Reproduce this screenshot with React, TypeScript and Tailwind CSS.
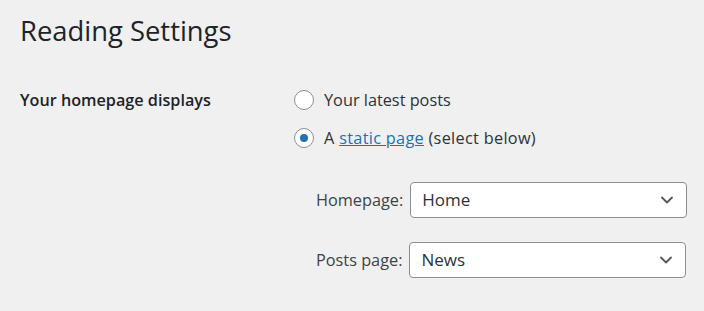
import { ChevronDown } from "lucide-react";

function Radio({ checked }: { checked?: boolean }) {
  return (
    <span className="flex h-5 w-5 shrink-0 items-center justify-center rounded-full border border-[#8c8f94] bg-white">
      {checked && <span className="h-2 w-2 rounded-full bg-[#2271b1]" />}
    </span>
  );
}

function PageSelect({ value }: { value: string }) {
  return (
    <div className="flex h-9 w-[277px] items-center justify-between rounded-[4px] border border-[#8c8f94] bg-white pl-[11px] pr-[9px] text-[17px] text-[#2c3338]">
      <span>{value}</span>
      <ChevronDown className="h-5 w-5 text-[#50575e]" strokeWidth={2.2} />
    </div>
  );
}

export default function App() {
  return (
    <div
      className="h-[311px] w-[704px] overflow-hidden bg-[#f0f0f1] pl-5 text-[#1d2327]"
      style={{ fontFamily: '"Open Sans", "Noto Sans", sans-serif' }}
    >
      <h1 className="pt-[13px] text-[27.4px] leading-9 font-normal">Reading Settings</h1>

      <div className="mt-[41px] flex">
        <div className="w-[274px] text-[16.2px] font-semibold leading-5">Your homepage displays</div>

        <div className="flex flex-col text-[16.3px] text-[#2c3338]">
          <label className="flex h-5 items-center gap-[10px]">
            <Radio />
            <span>Your latest posts</span>
          </label>
          <label className="mt-[18px] flex h-5 items-center gap-[10px]">
            <Radio checked />
            <span className="tracking-[0.3px]">
              A{" "}
              <a href="#" className="text-[#2271b1] underline">
                static page
              </a>{" "}
              (select below)
            </span>
          </label>

          <div className="mt-[34px] ml-[22px] flex flex-col gap-6 text-[#3c434a]">
            <div className="flex items-center gap-[7px]">
              <span>Homepage:</span>
              <PageSelect value="Home" />
            </div>
            <div className="flex items-center gap-[7px]">
              <span>Posts page:</span>
              <PageSelect value="News" />
            </div>
          </div>
        </div>
      </div>
    </div>
  );
}
